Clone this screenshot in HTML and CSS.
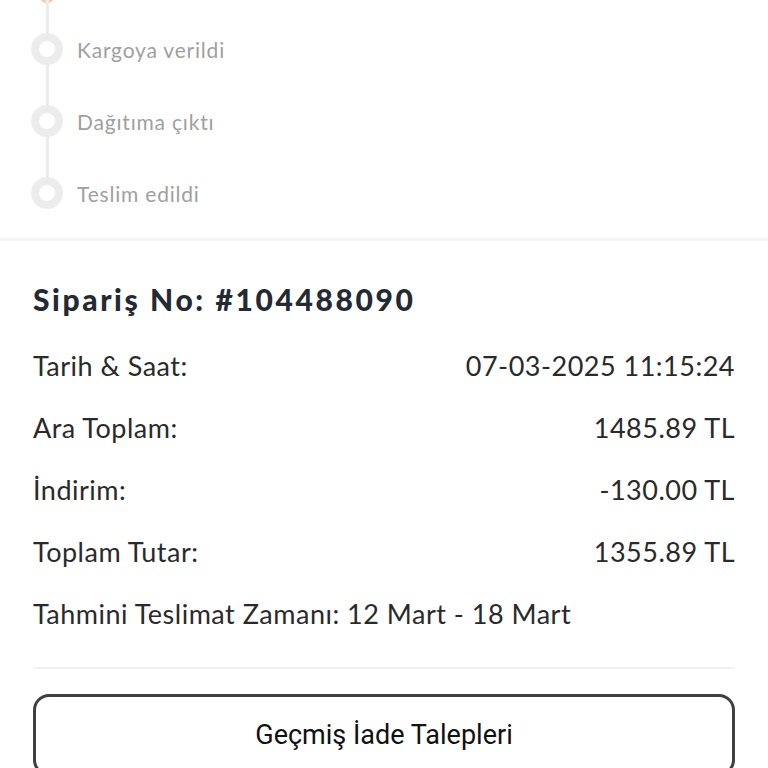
FILE: index.html
```html
<!DOCTYPE html>
<html lang="tr">
<head>
<meta charset="utf-8">
<link rel="stylesheet" href="styles.css">
</head>
<body>
<section class="tracking">
  <span class="prev-tip"></span>
  <ul class="timeline">
    <li class="step"><span class="dot"></span><span class="label">Kargoya verildi</span></li>
    <li class="step"><span class="dot"></span><span class="label">Dağıtıma çıktı</span></li>
    <li class="step"><span class="dot"></span><span class="label">Teslim edildi</span></li>
  </ul>
</section>
<div class="band"></div>
<section class="summary">
  <h2 class="order-no">Sipariş No: #104488090</h2>
  <div class="row"><span>Tarih &amp; Saat:</span><span>07-03-2025 11:15:24</span></div>
  <div class="row"><span>Ara Toplam:</span><span>1485.89 TL</span></div>
  <div class="row"><span>İndirim:</span><span>-130.00 TL</span></div>
  <div class="row"><span>Toplam Tutar:</span><span>1355.89 TL</span></div>
  <div class="row"><span>Tahmini Teslimat Zamanı: 12 Mart - 18 Mart</span></div>
  <hr class="divider">
  <button class="history-btn">Geçmiş İade Talepleri</button>
</section>
</body>
</html>
```
FILE: styles.css
```css
* { box-sizing: border-box; }
html, body { margin: 0; padding: 0; background: #fff; }
body {
  font-family: "Lato", "Liberation Sans", sans-serif;
  width: 768px;
  height: 768px;
  overflow: hidden;
}
.tracking {
  position: relative;
  height: 238px;
  padding-top: 13px;
}
.prev-tip {
  position: absolute;
  left: 41px;
  top: -4px;
  width: 12px;
  height: 7px;
  border-radius: 50%;
  background: #f2cfa8;
}
.timeline {
  list-style: none;
  margin: 0;
  padding: 0;
  position: relative;
}
.timeline::before {
  content: "";
  position: absolute;
  left: 46px;
  top: -13px;
  bottom: 36px;
  width: 3px;
  background: #ececec;
}
.step {
  position: relative;
  height: 72px;
  display: flex;
  align-items: center;
  padding-left: 31px;
}
.dot {
  width: 32px;
  height: 32px;
  border-radius: 50%;
  border: 8px solid #ececec;
  background: #fff;
  flex: none;
}
.label {
  margin-left: 14px;
  font-size: 21px;
  color: #a0a0a0;
  letter-spacing: 0.8px;
}
.band {
  height: 3px;
  background: #f4f4f4;
}
.summary {
  padding: 38px 33px 0;
}
.order-no {
  margin: 0;
  font-size: 30px;
  line-height: 40px;
  font-weight: 900;
  letter-spacing: 2.6px;
  color: #232a33;
  margin-bottom: 15px;
}
.row {
  display: flex;
  justify-content: space-between;
  align-items: center;
  height: 62px;
  font-size: 27px;
  letter-spacing: 0.5px;
  color: #2a2a2a;
}
.divider {
  border: none;
  height: 2px;
  background: #f1f1f1;
  margin: 23px 0 0;
}
.history-btn {
  display: block;
  width: 100%;
  margin-top: 25px;
  height: 82px;
  border: 3px solid #404040;
  border-radius: 16px;
  background: #fff;
  font-family: "Roboto", "Liberation Sans", sans-serif;
  font-size: 27px;
  color: #111;
  padding: 0 0 0;
}
```
